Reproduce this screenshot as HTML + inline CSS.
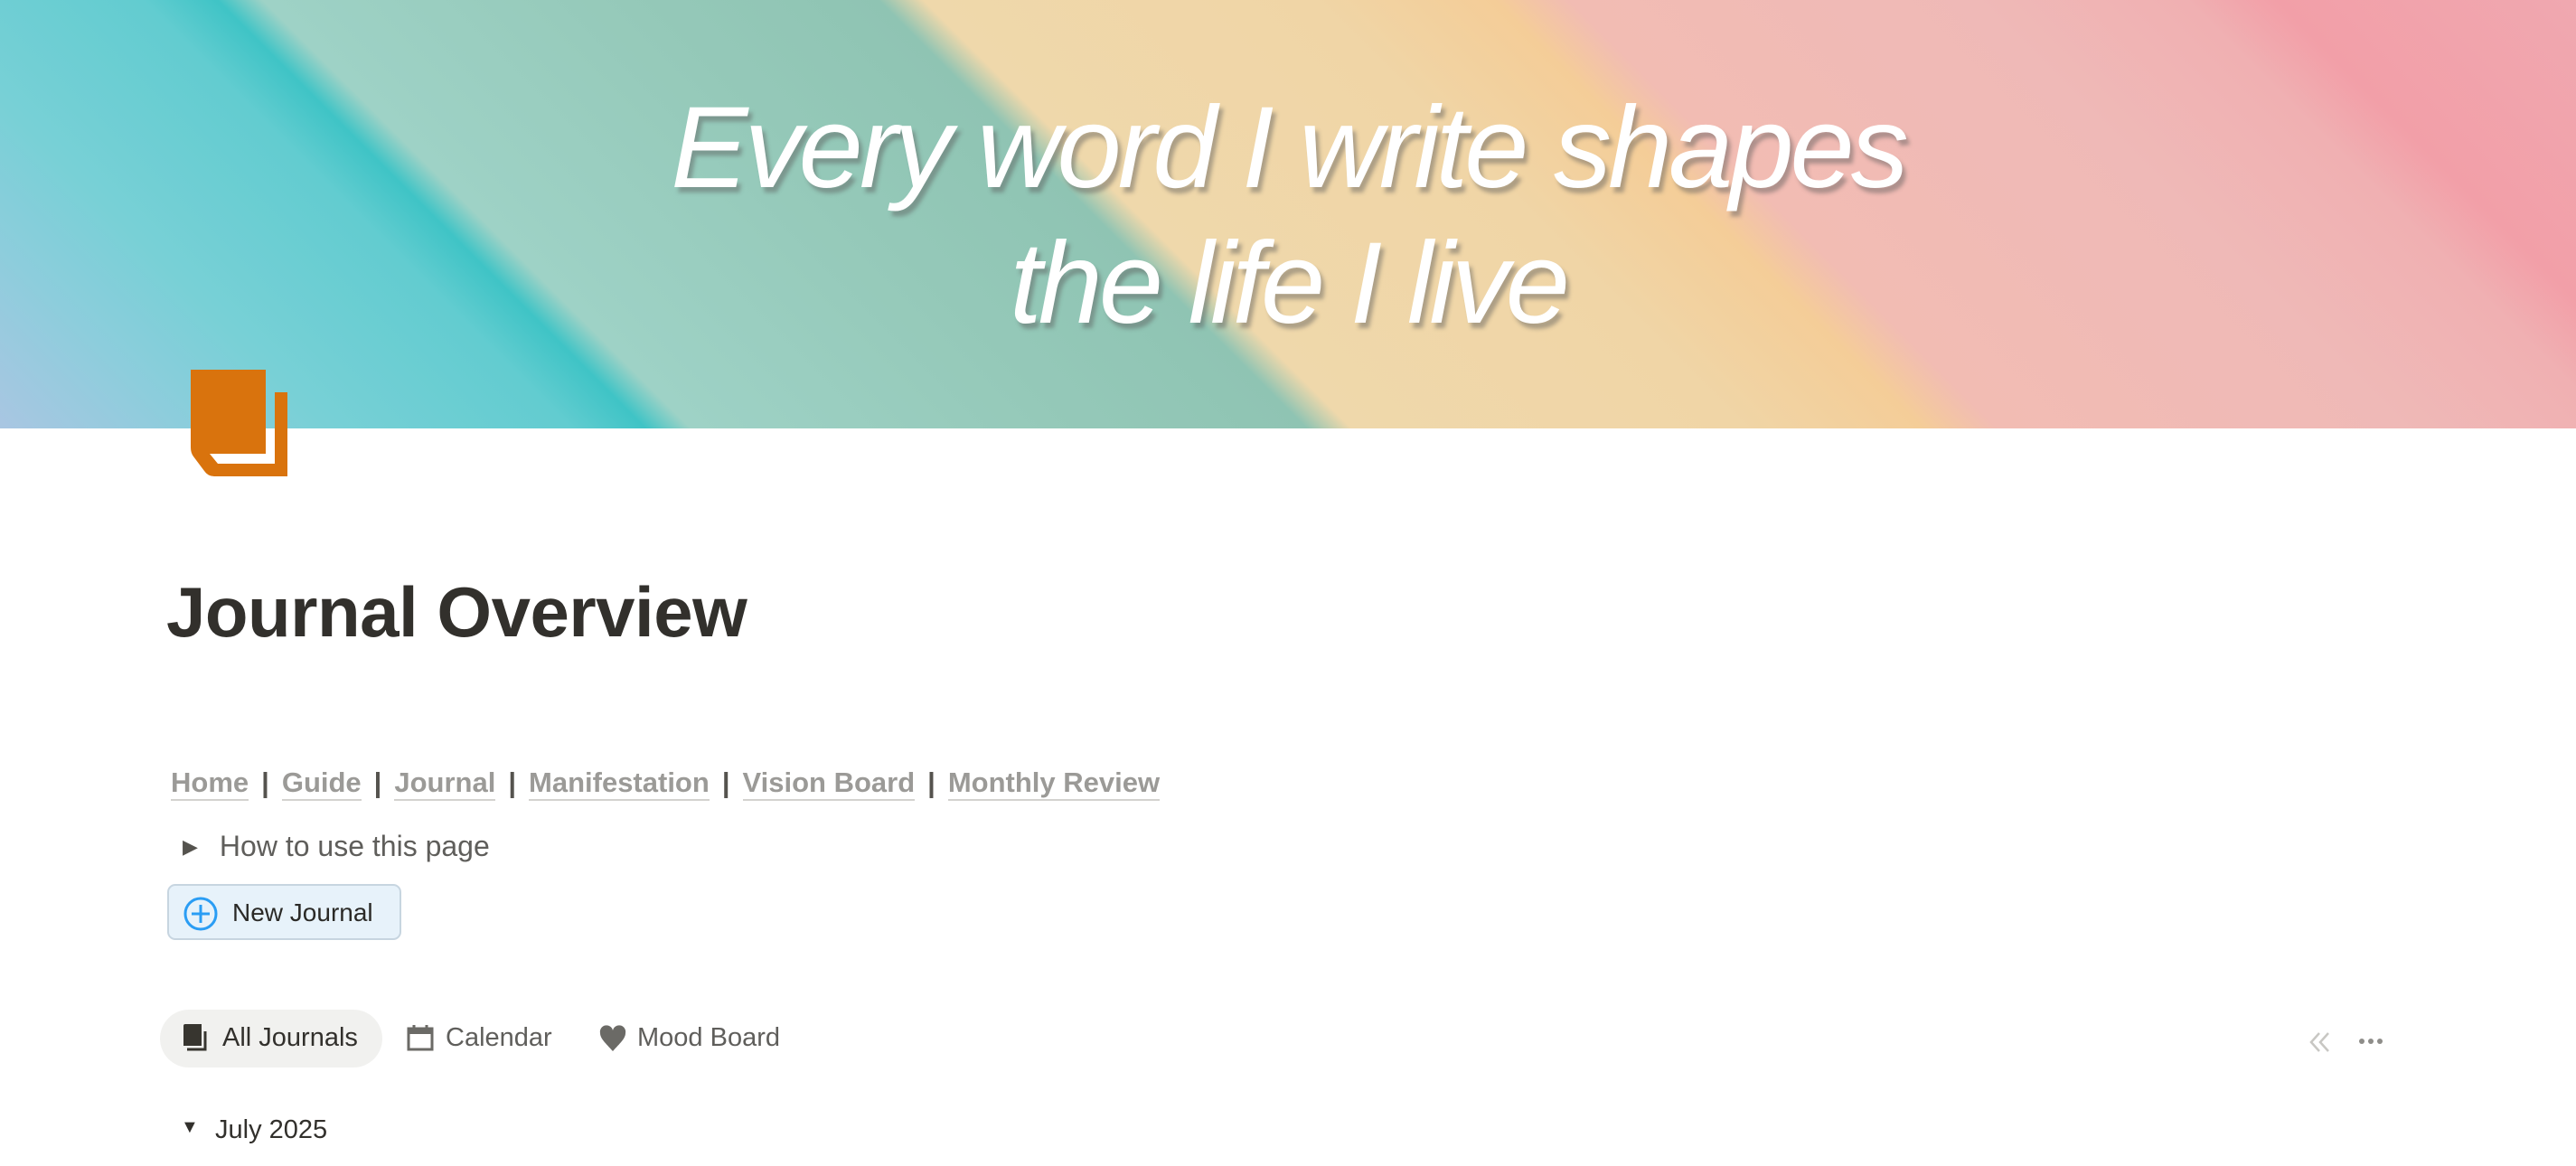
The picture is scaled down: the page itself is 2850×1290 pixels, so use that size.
<!DOCTYPE html>
<html><head><meta charset="utf-8"><style>
*{margin:0;padding:0;box-sizing:border-box}
body{width:2850px;height:1290px;overflow:hidden;background:#fff;font-family:"Liberation Sans",sans-serif;position:relative;color:#37352f}
.banner{position:absolute;left:0;top:0;width:2850px;height:474px;
background:linear-gradient(45deg,#a9c6e2 0%,#8dcddc 6%,#78d0d6 11%,#62ccd0 19%,#3fc4c6 21.5%,#9ed2c6 23%,#95c9b9 35%,#8fc4b3 43.5%,#efd8ab 45%,#f0d5a6 58%,#f4cd98 64%,#f2bcb3 66.5%,#efb9b7 80%,#f0b0b2 87%,#f29fa8 90%,#f0a8b0 100%);}
.btxt{position:absolute;left:0;width:2850px;text-align:center;color:#fff;font-style:italic;font-size:128px;text-shadow:4px 6px 4px rgba(90,90,90,.45);letter-spacing:-4px}
.title{position:absolute;left:184px;top:632px;font-size:78px;font-weight:bold;color:#32302c;letter-spacing:-0.5px}
.nav{position:absolute;left:189px;top:848px;font-size:31px;font-weight:bold;color:#9b9a97;white-space:nowrap}
.nav a{color:#9b9a97;text-decoration:none;border-bottom:2px solid #d3d2cf;padding-bottom:1px}
.nav .sep{color:#55534e;margin:0 14px}
.toggle{position:absolute;left:202px;top:918px;font-size:32px;color:#5f5e5b}
.btn{position:absolute;left:185px;top:978px;width:259px;height:62px;background:#e7f2fa;border:2px solid #c7d5e0;border-radius:9px}
.btn span{position:absolute;left:70px;top:14px;font-size:28px;color:#2b2a27}
.tab{position:absolute;top:1132px;font-size:29px;color:#5f5e5b}
.pill{position:absolute;left:177px;top:1117px;width:246px;height:64px;background:#f1f1ef;border-radius:32px}
</style></head><body>
<div class="banner"></div>
<div class="btxt" style="top:90px">Every word I write shapes</div>
<div class="btxt" style="top:240px">the life I live</div>
<svg style="position:absolute;left:205px;top:405px" width="120" height="125" viewBox="205 405 120 125">
<path d="M211 409H294V502H232L241 513H304V434H318V527H237Q230 527 226 521L214 505Q211 501 211 495Z" fill="#d9730d"/>
</svg>
<div class="title">Journal Overview</div>
<div class="nav"><a>Home</a><span class="sep">|</span><a>Guide</a><span class="sep">|</span><a>Journal</a><span class="sep">|</span><a>Manifestation</a><span class="sep">|</span><a>Vision Board</a><span class="sep">|</span><a>Monthly Review</a></div>
<div class="toggle"><span style="font-size:22px;position:relative;top:-3px;color:#55534e">▶</span><span style="margin-left:24px">How to use this page</span></div>
<div class="btn"><svg style="position:absolute;left:16px;top:12px" width="38" height="38" viewBox="0 0 38 38"><circle cx="19" cy="19" r="17" fill="none" stroke="#2a9df4" stroke-width="3"/><path d="M19 9V29M9 19H29" stroke="#2a9df4" stroke-width="3"/></svg><span>New Journal</span></div>
<div class="pill"></div>
<svg style="position:absolute;left:203px;top:1133px" width="28" height="32" viewBox="0 0 28 32"><path d="M0 2Q0 0 2 0H20V24H0Z" fill="#37352f"/><path d="M24 8V28H4" fill="none" stroke="#37352f" stroke-width="3"/></svg>
<div class="tab" style="left:246px;color:#32302c">All Journals</div>
<svg style="position:absolute;left:450px;top:1133px" width="30" height="30" viewBox="0 0 30 30"><rect x="2" y="5" width="26" height="23" fill="none" stroke="#6b6a66" stroke-width="3"/><rect x="2" y="5" width="26" height="6" fill="#6b6a66"/><path d="M8 1V7M22 1V7" stroke="#6b6a66" stroke-width="3"/></svg>
<div class="tab" style="left:493px">Calendar</div>
<svg style="position:absolute;left:662px;top:1134px" width="32" height="30" viewBox="0 0 32 30"><path d="M16 29C8 20 2 15 2 9A7 7 0 0 1 16 6A7 7 0 0 1 30 9C30 15 24 20 16 29Z" fill="#6b6a66"/></svg>
<div class="tab" style="left:705px">Mood Board</div>
<svg style="position:absolute;left:2555px;top:1141px" width="24" height="24" viewBox="0 0 24 24"><path d="M11 2L2 12L11 22M21 2L12 12L21 22" fill="none" stroke="#c8c7c3" stroke-width="2.5"/></svg>
<svg style="position:absolute;left:2608px;top:1146px" width="30" height="12" viewBox="0 0 30 12"><circle cx="5" cy="6" r="3" fill="#8e8d89"/><circle cx="15" cy="6" r="3" fill="#8e8d89"/><circle cx="25" cy="6" r="3" fill="#8e8d89"/></svg>
<div style="position:absolute;left:200px;top:1236px;font-size:20px;color:#32302c">▼</div>
<div class="tab" style="left:238px;top:1234px;color:#32302c">July 2025</div>
</body></html>
